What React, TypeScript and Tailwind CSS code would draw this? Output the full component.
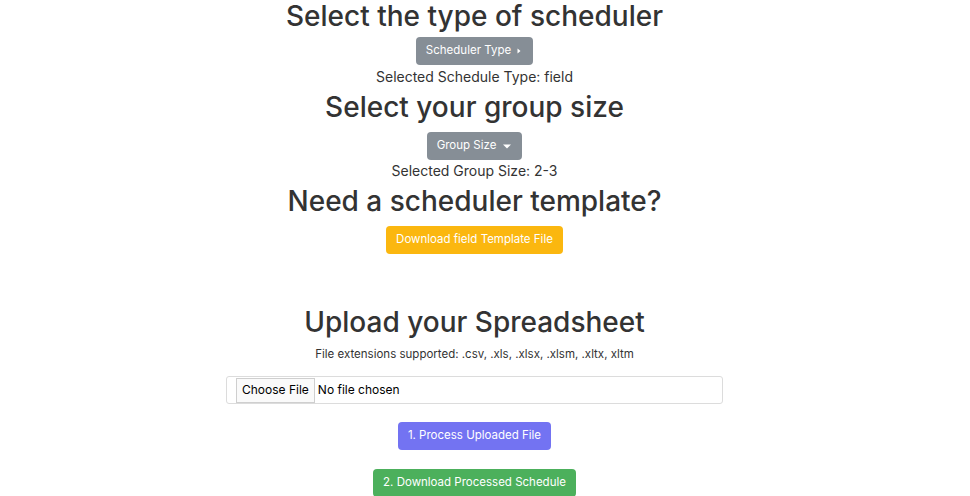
import { useState } from 'react'

function Btn({ className, children }: { className: string; children: React.ReactNode }) {
  return (
    <button className={`flex h-[28px] items-center rounded-[4px] px-[10px] text-[11.5px] text-white ${className}`}>
      {children}
    </button>
  )
}

export default function App() {
  const [scheduleType] = useState('field')
  const [groupSize] = useState('2-3')

  return (
    <div className="flex min-h-screen flex-col items-center bg-white pr-[21px] text-[#333] [font-family:Inter,'Noto_Sans',sans-serif]">
      <h1 className="pt-[1px] text-[28px] leading-[31px] font-medium">Select the type of scheduler</h1>
      <div className="mt-[5px]">
        <Btn className="bg-[#868e96]">
          Scheduler Type
          <svg width="8" height="8" viewBox="0 0 8 8" className="ml-[4px]">
            <path d="M2.5 1.5 L5.5 4 L2.5 6.5 Z" fill="white" />
          </svg>
        </Btn>
      </div>
      <p className="mt-[2px] text-[14px] leading-[20px]">Selected Schedule Type: {scheduleType}</p>

      <h1 className="mt-[2px] text-[28px] leading-[36px] font-medium">Select your group size</h1>
      <div className="mt-[7px]">
        <Btn className="bg-[#868e96]">
          Group Size
          <svg width="10" height="8" viewBox="0 0 10 8" className="ml-[6px]">
            <path d="M1 2.5 L9 2.5 L5 6.5 Z" fill="white" />
          </svg>
        </Btn>
      </div>
      <p className="mt-[1px] text-[14px] leading-[20px]">Selected Group Size: {groupSize}</p>

      <h1 className="mt-[2px] text-[28px] leading-[36px] font-medium">Need a scheduler template?</h1>
      <div className="mt-[7px]">
        <Btn className="bg-[#fbb70f]">Download field Template File</Btn>
      </div>

      <h1 className="mt-[50px] text-[28px] leading-[36px] font-medium">Upload your Spreadsheet</h1>
      <p className="mt-[6px] text-[11.5px] leading-[16px]">File extensions supported: .csv, .xls, .xlsx, .xlsm, .xltx, xltm</p>

      <div className="mt-[14px] flex h-[28px] w-[497px] items-center rounded-[3px] border border-[#dcdcdc] px-[9px]">
        <span className="flex h-[25px] items-center border border-[#cfcfcf] bg-[#fafafa] px-[5px] text-[12px] text-black">Choose File</span>
        <span className="ml-[3px] text-[12px] text-black">No file chosen</span>
      </div>

      <div className="mt-[18px]">
        <Btn className="bg-[#7373f2]">1. Process Uploaded File</Btn>
      </div>
      <div className="mt-[19px]">
        <Btn className="bg-[#4cb05c]">2. Download Processed Schedule</Btn>
      </div>
    </div>
  )
}
